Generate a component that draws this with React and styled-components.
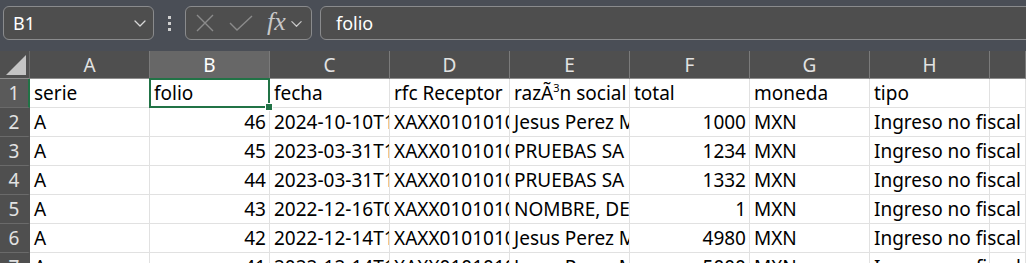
import React from 'react'
import styled, { createGlobalStyle } from 'styled-components'

const GlobalStyle = createGlobalStyle`
  html, body {
    margin: 0;
    padding: 0;
    background: #ffffff;
    overflow: hidden;
  }
  body {
    font-family: "Noto Sans", "Open Sans", sans-serif;
  }
`

const columns = ['A', 'B', 'C', 'D', 'E', 'F', 'G', 'H', '']

// each row: [value, alignRight]
const rows = [
  [['serie'], ['folio'], ['fecha'], ['rfc Receptor'], ['razÃ³n social'], ['total'], ['moneda'], ['tipo'], ['']],
  [['A'], ['46', true], ['2024-10-10T12:39:00'], ['XAXX010101000'], ['Jesus Perez Mendez'], ['1000', true], ['MXN'], ['Ingreso no fiscal'], ['']],
  [['A'], ['45', true], ['2023-03-31T10:12:00'], ['XAXX010101000'], ['PRUEBAS SA DE CV'], ['1234', true], ['MXN'], ['Ingreso no fiscal'], ['']],
  [['A'], ['44', true], ['2023-03-31T10:05:00'], ['XAXX010101000'], ['PRUEBAS SA DE CV'], ['1332', true], ['MXN'], ['Ingreso no fiscal'], ['']],
  [['A'], ['43', true], ['2022-12-16T09:30:00'], ['XAXX010101000'], ['NOMBRE, DE PRUEBA'], ['1', true], ['MXN'], ['Ingreso no fiscal'], ['']],
  [['A'], ['42', true], ['2022-12-14T11:20:00'], ['XAXX010101000'], ['Jesus Perez Mendez'], ['4980', true], ['MXN'], ['Ingreso no fiscal'], ['']],
  [['A'], ['41', true], ['2022-12-14T10:02:00'], ['XAXX010101000'], ['Jesus Perez Mendez'], ['5000', true], ['MXN'], ['Ingreso no fiscal'], ['']],
]

function Chevron({ size = 14, color = '#d8d8d8' }) {
  return (
    <svg width={size} height={size} viewBox="0 0 14 14" fill="none">
      <polyline points="2,5 7,10 12,5" stroke={color} strokeWidth="1.3" strokeLinecap="round" strokeLinejoin="round" />
    </svg>
  )
}

function App() {
  return (
    <>
      <GlobalStyle />
      <Toolbar>
        <NameBox>
          <span>B1</span>
          <Chevron />
        </NameBox>
        <Dots>
          <i /><i /><i />
        </Dots>
        <FuncButtons>
          <svg width="20" height="20" viewBox="0 0 20 20" fill="none">
            <path d="M2 2 L18 18 M18 2 L2 18" stroke="#8b8b8b" strokeWidth="1.4" />
          </svg>
          <svg width="26" height="20" viewBox="0 0 26 20" fill="none">
            <polyline points="2,10 9,17 24,3" stroke="#8b8b8b" strokeWidth="1.4" fill="none" />
          </svg>
          <Fx>fx</Fx>
          <Chevron size={13} color="#c8c8c8" />
        </FuncButtons>
        <FormulaBar>folio</FormulaBar>
      </Toolbar>
      <SheetFrame>
        <Sheet>
          <Corner>
            <svg width="22" height="22" viewBox="0 0 22 22">
              <polygon points="21,1 21,21 1,21" fill="#c4c4c4" />
            </svg>
          </Corner>
          {columns.map((c, i) => (
            <ColHeader key={'h' + i} $selected={c === 'B'}>{c}</ColHeader>
          ))}
          {rows.map((row, r) => (
            <React.Fragment key={r}>
              <RowHeader $selected={r === 0}>{r + 1}</RowHeader>
              {row.map(([value, right], c) => {
                const active = r === 0 && c === 1
                return (
                  <Cell key={c} $right={right} $spill={c === 7} $active={active}>
                    {c === 4 && r === 0 ? (
                      <>razÃ<sup>3</sup>n social</>
                    ) : value}
                    {active && (
                      <Selection>
                        <Handle />
                      </Selection>
                    )}
                  </Cell>
                )
              })}
            </React.Fragment>
          ))}
        </Sheet>
      </SheetFrame>
    </>
  )
}

const Toolbar = styled.div`
  display: flex;
  align-items: center;
  height: 51px;
  box-sizing: border-box;
  padding: 6px 0 11px 3px;
  background: #4a4e56;
  overflow: hidden;
`

const Box = styled.div`
  height: 34px;
  box-sizing: border-box;
  border: 1px solid #8a8b8d;
  border-radius: 6px;
  background: #4e4e4e;
  display: flex;
  align-items: center;
`

const NameBox = styled(Box)`
  width: 151px;
  padding: 0 6px 0 9px;
  justify-content: space-between;
  color: #ffffff;
  font-size: 18px;
`

const Dots = styled.div`
  width: 31px;
  display: flex;
  flex-direction: column;
  align-items: center;
  gap: 3px;

  i {
    display: block;
    width: 3px;
    height: 3px;
    background: #d0d0d0;
  }
`

const FuncButtons = styled(Box)`
  width: 127px;
  padding: 0 0 0 9px;
  gap: 13px;

  svg:last-child {
    margin-left: -9px;
  }
`

const Fx = styled.span`
  font-family: "Liberation Serif", serif;
  font-style: italic;
  font-size: 26px;
  color: #c8c8c8;
  line-height: 1;
  margin-top: -3px;
`

const FormulaBar = styled(Box)`
  flex: 1;
  margin-left: 8px;
  margin-right: -20px;
  padding-left: 15px;
  color: #ffffff;
  font-size: 18px;
`

const SheetFrame = styled.div`
  height: 212px;
  overflow: hidden;
`

const Sheet = styled.div`
  display: grid;
  grid-template-columns: 30px repeat(8, 120px) 1fr;
  grid-template-rows: 28px repeat(7, 29px);
`

const Corner = styled.div`
  background: #4f4f4f;
  border-right: 1px solid #6b6b6b;
  border-bottom: 1px solid #8d8d8d;
  display: flex;
  align-items: flex-end;
  justify-content: flex-end;
  padding: 0 2px 2px 0;
`

const ColHeader = styled.div`
  background: ${p => (p.$selected ? '#676767' : '#4f4f4f')};
  color: ${p => (p.$selected ? '#ffffff' : '#e2e2e2')};
  border-right: 1px solid #7a7a7a;
  border-bottom: 1px solid ${p => (p.$selected ? '#a0a0a0' : '#8d8d8d')};
  font-size: 19px;
  display: flex;
  align-items: center;
  justify-content: center;
  box-sizing: border-box;
`

const RowHeader = styled.div`
  background: ${p => (p.$selected ? '#5a5a5a' : '#4f4f4f')};
  color: #e2e2e2;
  border-bottom: 1px solid #6a6a6a;
  border-right: 2px solid ${p => (p.$selected ? '#217346' : '#4f4f4f')};
  font-size: 19px;
  display: flex;
  align-items: center;
  justify-content: center;
  box-sizing: border-box;
`

const Cell = styled.div`
  position: relative;
  border-right: 1px solid #e1e1e1;
  border-bottom: 1px solid #e1e1e1;
  box-sizing: border-box;
  font-size: 19px;
  line-height: 28px;
  color: #000000;
  white-space: nowrap;
  overflow: ${p => (p.$spill || p.$active ? 'visible' : 'clip')};
  overflow-clip-margin: 0;
  text-align: ${p => (p.$right ? 'right' : 'left')};
  padding: 0 3px 0 4px;
  z-index: ${p => (p.$active ? 2 : p.$spill ? 1 : 'auto')};

  sup {
    font-size: 11px;
    vertical-align: 8px;
    line-height: 0;
  }
`

const Selection = styled.div`
  position: absolute;
  left: -1px;
  top: -1px;
  right: -1px;
  bottom: -1px;
  border: 2px solid #217346;
  pointer-events: none;
`

const Handle = styled.div`
  position: absolute;
  right: -5px;
  bottom: -5px;
  width: 6px;
  height: 6px;
  background: #217346;
  border: 1px solid #ffffff;
`

export default App
